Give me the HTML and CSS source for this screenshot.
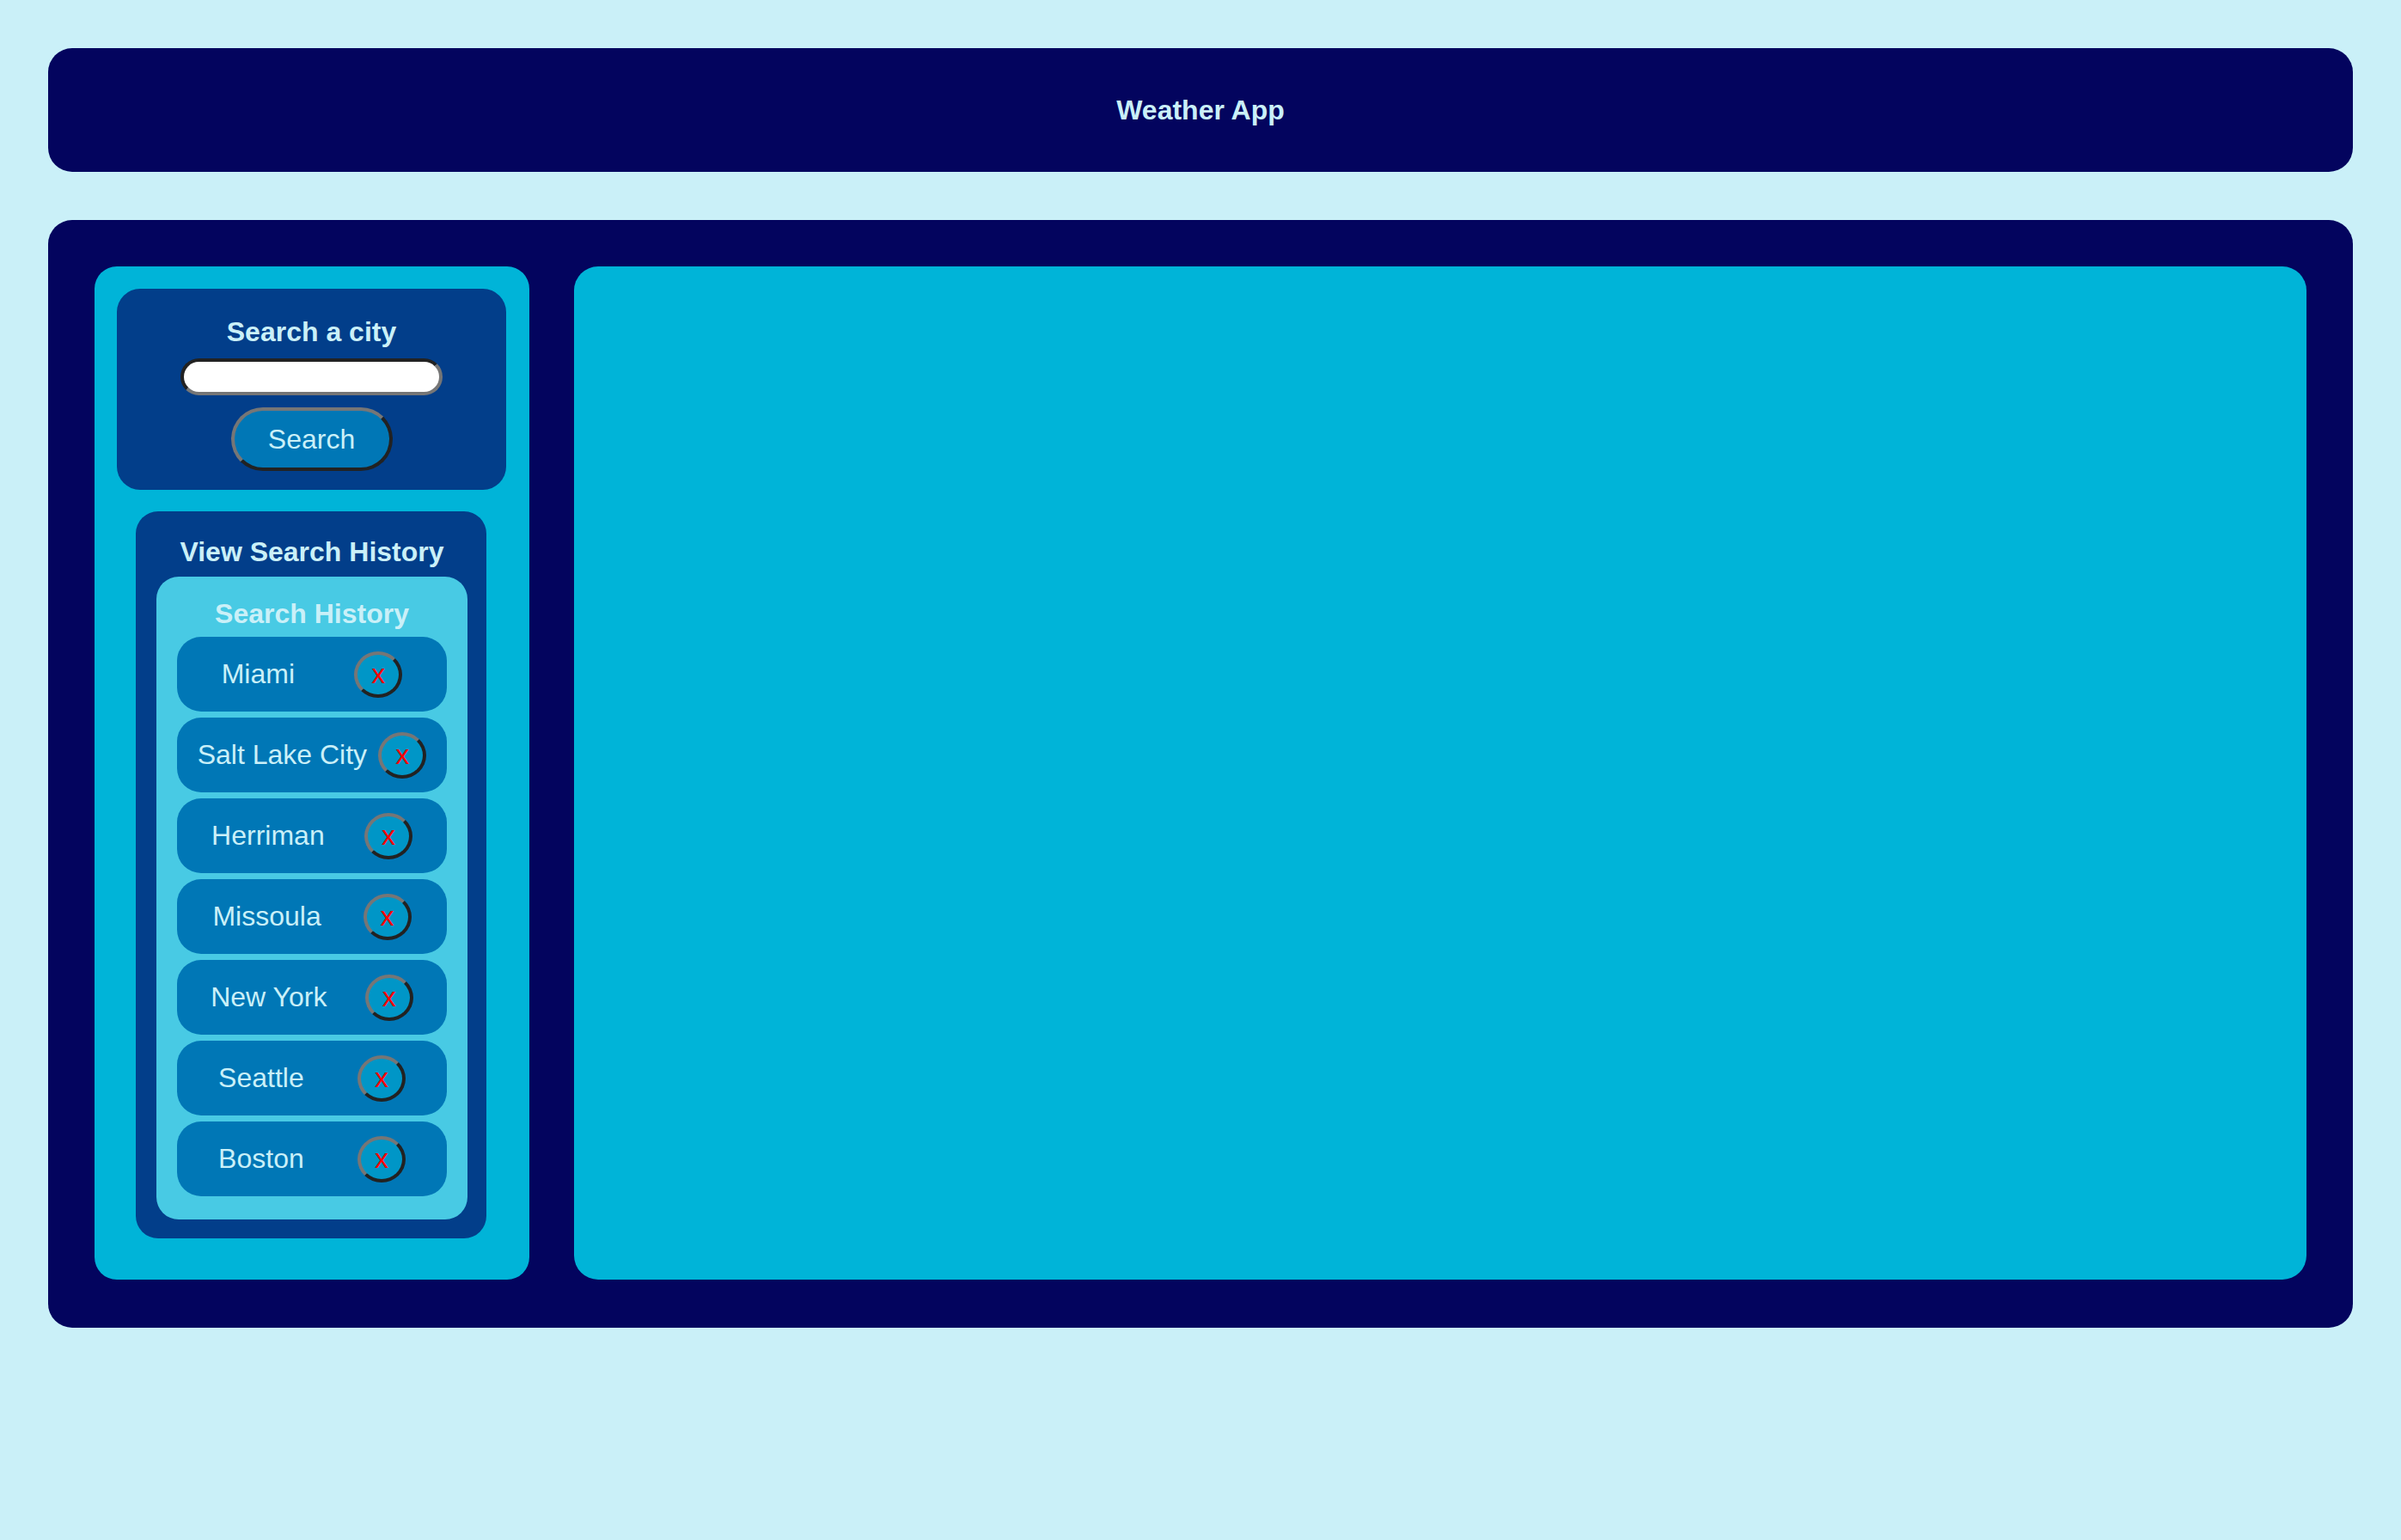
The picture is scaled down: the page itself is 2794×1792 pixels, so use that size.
FILE: index.html
```html
<!DOCTYPE html>
<html lang="en">
<head>
<meta charset="utf-8">
<title>Weather App</title>
<link rel="stylesheet" href="styles.css">
</head>
<body>
  <header class="app-header">
    <h1 class="app-title">Weather App</h1>
  </header>
  <main class="app-main">
    <aside class="sidebar">
      <section class="search-box">
        <h2 class="search-title">Search a city</h2>
        <input class="search-input" type="text">
        <button class="search-btn" type="button">Search</button>
      </section>
      <section class="history-box">
        <h2 class="history-title">View Search History</h2>
        <div class="history-list">
          <h3 class="history-sub">Search History</h3>
          <div class="history-item"><span class="city">Miami</span><button class="remove" type="button">x</button></div>
          <div class="history-item"><span class="city">Salt Lake City</span><button class="remove" type="button">x</button></div>
          <div class="history-item"><span class="city">Herriman</span><button class="remove" type="button">x</button></div>
          <div class="history-item"><span class="city">Missoula</span><button class="remove" type="button">x</button></div>
          <div class="history-item"><span class="city">New York</span><button class="remove" type="button">x</button></div>
          <div class="history-item"><span class="city">Seattle</span><button class="remove" type="button">x</button></div>
          <div class="history-item"><span class="city">Boston</span><button class="remove" type="button">x</button></div>
        </div>
      </section>
    </aside>
    <section class="forecast"></section>
  </main>
</body>
</html>
```
FILE: styles.css
```css
* { box-sizing: border-box; }

html, body {
  margin: 0;
}

body {
  padding: 56px;
  background: #caf0f8;
  font-family: "Liberation Sans", Arial, sans-serif;
  color: #caf0f8;
}

.app-header {
  height: 144px;
  background: #03045e;
  border-radius: 28px;
  display: flex;
  align-items: center;
  justify-content: center;
}

.app-title {
  margin: 0;
  font-size: 32px;
  font-weight: bold;
  line-height: normal;
}

.app-main {
  margin-top: 56px;
  background: #03045e;
  border-radius: 28px;
  padding: 54px 54px 56px 54px;
  display: flex;
  gap: 52px;
}

.sidebar {
  width: 506px;
  flex: none;
  background: #00b4d8;
  border-radius: 26px;
  padding: 26px 27px 48px 26px;
  display: flex;
  flex-direction: column;
  align-items: flex-start;
}

.search-box {
  width: 453px;
  background: #023e8a;
  border-radius: 27px;
  padding: 32px 0 22px;
  display: flex;
  flex-direction: column;
  align-items: center;
}

.search-title {
  margin: 0 0 12px;
  font-size: 32px;
  font-weight: bold;
  line-height: normal;
}

.search-input {
  width: 305px;
  height: 43px;
  border: 4px solid;
  border-color: #222222 #767676 #767676 #222222;
  border-radius: 22px;
  background: #ffffff;
  margin: 0 0 14px;
  padding: 0 12px;
  font-size: 26px;
}

.search-btn {
  width: 188px;
  height: 74px;
  border: 4px solid;
  border-color: #767676 #222222 #222222 #767676;
  border-radius: 37px;
  background: #0077b6;
  color: #caf0f8;
  font-family: "Liberation Sans", Arial, sans-serif;
  font-size: 32px;
  padding: 0;
}

.history-box {
  width: 408px;
  margin: 25px 0 0 22px;
  background: #023e8a;
  border-radius: 26px;
  padding: 29px 22px 22px 24px;
  display: flex;
  flex-direction: column;
  align-items: center;
}

.history-title {
  margin: 0 0 10px;
  font-size: 32px;
  font-weight: bold;
  line-height: normal;
}

.history-list {
  width: 362px;
  background: #48cae4;
  border-radius: 26px;
  padding: 25px 24px 27px;
  display: flex;
  flex-direction: column;
  gap: 7px;
}

.history-sub {
  margin: 0 0 1px;
  text-align: center;
  font-size: 32px;
  font-weight: bold;
  line-height: normal;
  color: #caf0f8;
}

.history-item {
  height: 87px;
  background: #0077b6;
  border-radius: 28px;
  padding: 0 17px;
  display: flex;
  align-items: center;
  justify-content: space-around;
}

.city {
  font-size: 32px;
  line-height: normal;
  color: #caf0f8;
  white-space: nowrap;
}

.remove {
  width: 56px;
  height: 54px;
  flex: none;
  border: 4px solid;
  border-color: #767676 #222222 #222222 #767676;
  border-radius: 50%;
  background: #0096c7;
  color: #ff0000;
  font-family: "Liberation Sans", Arial, sans-serif;
  font-size: 32px;
  line-height: normal;
  padding: 0;
  display: flex;
  align-items: center;
  justify-content: center;
}

.forecast {
  flex: 1;
  background: #00b4d8;
  border-radius: 28px;
}
```
